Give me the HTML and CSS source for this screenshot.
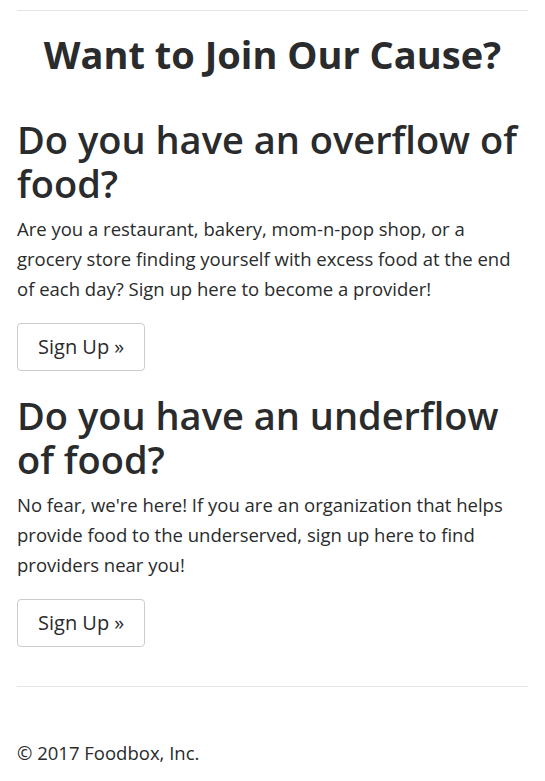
FILE: index.html
```html
<!DOCTYPE html>
<html>
<head>
<meta charset="utf-8">
<link rel="stylesheet" href="styles.css">
</head>
<body>
<div class="container">
  <hr class="rule">
  <h1 class="title">Want to Join Our Cause?</h1>
  <section class="block">
    <h2 class="heading">Do you have an overflow of food?</h2>
    <p class="text">Are you a restaurant, bakery, mom-n-pop shop, or a grocery store finding yourself with excess food at the end of each day? Sign up here to become a provider!</p>
    <a class="btn" href="#">Sign Up &raquo;</a>
  </section>
  <section class="block">
    <h2 class="heading">Do you have an underflow of food?</h2>
    <p class="text">No fear, we're here! If you are an organization that helps provide food to the underserved, sign up here to find providers near you!</p>
    <a class="btn" href="#">Sign Up &raquo;</a>
  </section>
  <hr class="rule rule-bottom">
  <footer class="footer">&copy; 2017 Foodbox, Inc.</footer>
</div>
</body>
</html>
```
FILE: styles.css
```css
html, body {
  margin: 0;
  padding: 0;
  background: #fff;
}
body {
  font-family: "Open Sans", "Noto Sans", sans-serif;
  color: #292b2c;
  font-size: 18.5px;
  line-height: 30px;
}
.container {
  padding: 0 17px;
}
.rule {
  border: 0;
  border-top: 1px solid #e5e5e5;
  margin: 10px 0 0;
  height: 0;
}
.title {
  font-size: 38px;
  font-weight: 700;
  line-height: 48px;
  text-align: center;
  margin: 19px 0 39px;
}
.block {
  display: flex;
  flex-direction: column;
  align-items: flex-start;
}
.heading {
  font-size: 38px;
  font-weight: 600;
  line-height: 44px;
  margin: 0 0 9px;
}
.text {
  margin: 0 0 19px;
}
.btn {
  display: inline-block;
  box-sizing: border-box;
  height: 48px;
  padding: 0 20px;
  border: 1px solid #ccc;
  border-radius: 4px;
  font-size: 20px;
  line-height: 46px;
  color: #292b2c;
  text-decoration: none;
  margin-bottom: 22px;
}
.rule-bottom {
  margin-top: 17px;
}
.footer {
  margin-top: 51px;
  padding-bottom: 10px;
}
```
